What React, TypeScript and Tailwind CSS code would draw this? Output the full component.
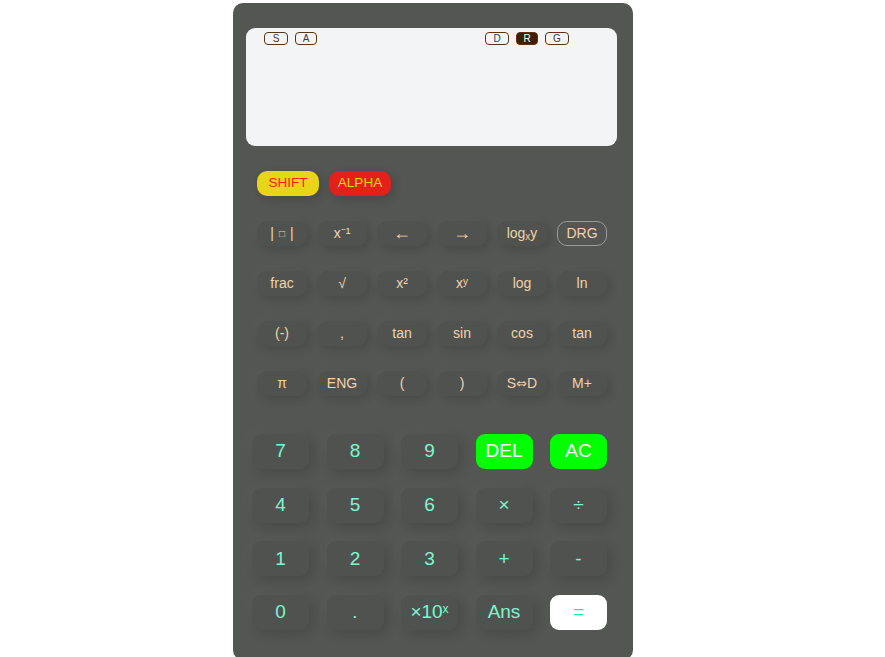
import React from "react";

const font = { fontFamily: '"Liberation Sans", Arial, sans-serif' };

function Ind({ t, active }: { t: string; active?: boolean }) {
  return (
    <div
      className={
        "h-[13px] rounded-[4px] border border-[#5a3412] flex items-center justify-center text-[10px] leading-none " +
        (active ? "bg-[#3f1f00] text-white" : "text-[#3a3a4a]")
      }
      style={{ width: t === "A" ? 22 : t === "R" ? 22 : 24 }}
    >
      {t}
    </div>
  );
}

function Fn({ children, outline }: { children: React.ReactNode; outline?: boolean }) {
  return (
    <div
      className={
        "h-[25px] w-[50px] flex items-center justify-center text-[14px] text-[#f0d2ac] rounded-[10px] " +
        (outline
          ? "border border-[#9a9a98] bg-transparent"
          : "bg-[#50524f] shadow-[3px_3px_10px_rgba(0,0,0,0.14),-3px_-3px_10px_rgba(255,255,255,0.03)]")
      }
    >
      {children}
    </div>
  );
}

function Num({ children, kind }: { children: React.ReactNode; kind?: "green" | "white" }) {
  let cls = "bg-[#50524f] text-[#7cf7cf] shadow-[4px_4px_12px_rgba(0,0,0,0.14),-4px_-4px_12px_rgba(255,255,255,0.03)]";
  if (kind === "green") cls = "bg-[#00ff00] text-white";
  if (kind === "white") cls = "bg-white text-[#14f0b4]";
  return (
    <div className={"h-[35px] w-[57px] rounded-[9px] flex items-center justify-center text-[19px] " + cls}>
      {children}
    </div>
  );
}

export default function App() {
  const fnRows: React.ReactNode[][] = [
    [
      <span key="abs" className="flex items-center gap-[5px]">
        |<span className="text-[10px]">□</span>|
      </span>,
      "x⁻¹",
      <span key="la" className="text-[18px]">←</span>,
      <span key="ra" className="text-[18px]">→</span>,
      <span key="l">log<span className="text-[10px] relative top-[2px]">x</span>y</span>,
      "DRG",
    ],
    ["frac", "√", "x²", <span key="xy">x<span className="text-[10px] relative top-[-3px]">y</span></span>, "log", "ln"],
    ["(-)", ",", "tan", "sin", "cos", "tan"],
    [
      "π",
      "ENG",
      "(",
      ")",
      <span key="sd">
        S<span style={{ fontFamily: '"DejaVu Sans", sans-serif' }} className="text-[13px]">⇔</span>D
      </span>,
      "M+",
    ],
  ];
  return (
    <div className="w-[885px] h-[657px] bg-white overflow-hidden" style={font}>
      <div className="ml-[233px] mt-[3px] w-[400px] h-[657px] bg-[#545653] rounded-[10px] pt-[25px]">
        <div className="ml-[13px] w-[371px] h-[118px] bg-[#f3f4f6] rounded-[9px] pt-[4px]">
          <div className="flex items-center">
            <div className="ml-[18px] flex gap-[7px]">
              <Ind t="S" />
              <Ind t="A" />
            </div>
            <div className="ml-[168px] flex gap-[7px]">
              <Ind t="D" />
              <Ind t="R" active />
              <Ind t="G" />
            </div>
          </div>
        </div>
        <div className="ml-[24px] mt-[25px] flex gap-[10px]">
          <div className="h-[25px] w-[62px] rounded-[10px] bg-[#e8d418] text-[#ff1a00] text-[13.5px] flex items-center justify-center shadow-[3px_3px_10px_rgba(0,0,0,0.16)]">
            SHIFT
          </div>
          <div className="h-[25px] w-[62px] rounded-[10px] bg-[#e3211b] text-[#f2d21c] text-[13.5px] flex items-center justify-center shadow-[3px_3px_10px_rgba(0,0,0,0.16)]">
            ALPHA
          </div>
        </div>
        <div className="ml-[24px] mt-[25px] flex flex-col gap-[25px]">
          {fnRows.map((row, i) => (
            <div key={i} className="flex gap-[10px]">
              {row.map((k, j) => (
                <Fn key={j} outline={i === 0 && j === 5}>
                  {k}
                </Fn>
              ))}
            </div>
          ))}
        </div>
        <div className="ml-[19px] mt-[38px] grid grid-cols-[repeat(5,57px)] gap-x-[17.5px] gap-y-[18.7px]">
          <Num>7</Num>
          <Num>8</Num>
          <Num>9</Num>
          <Num kind="green">DEL</Num>
          <Num kind="green">AC</Num>
          <Num>4</Num>
          <Num>5</Num>
          <Num>6</Num>
          <Num>×</Num>
          <Num>÷</Num>
          <Num>1</Num>
          <Num>2</Num>
          <Num>3</Num>
          <Num>+</Num>
          <Num>-</Num>
          <Num>0</Num>
          <Num>.</Num>
          <Num>
            <span>
              ×10<span className="text-[12px] relative top-[-5px]">x</span>
            </span>
          </Num>
          <Num>Ans</Num>
          <Num kind="white">=</Num>
        </div>
      </div>
    </div>
  );
}
